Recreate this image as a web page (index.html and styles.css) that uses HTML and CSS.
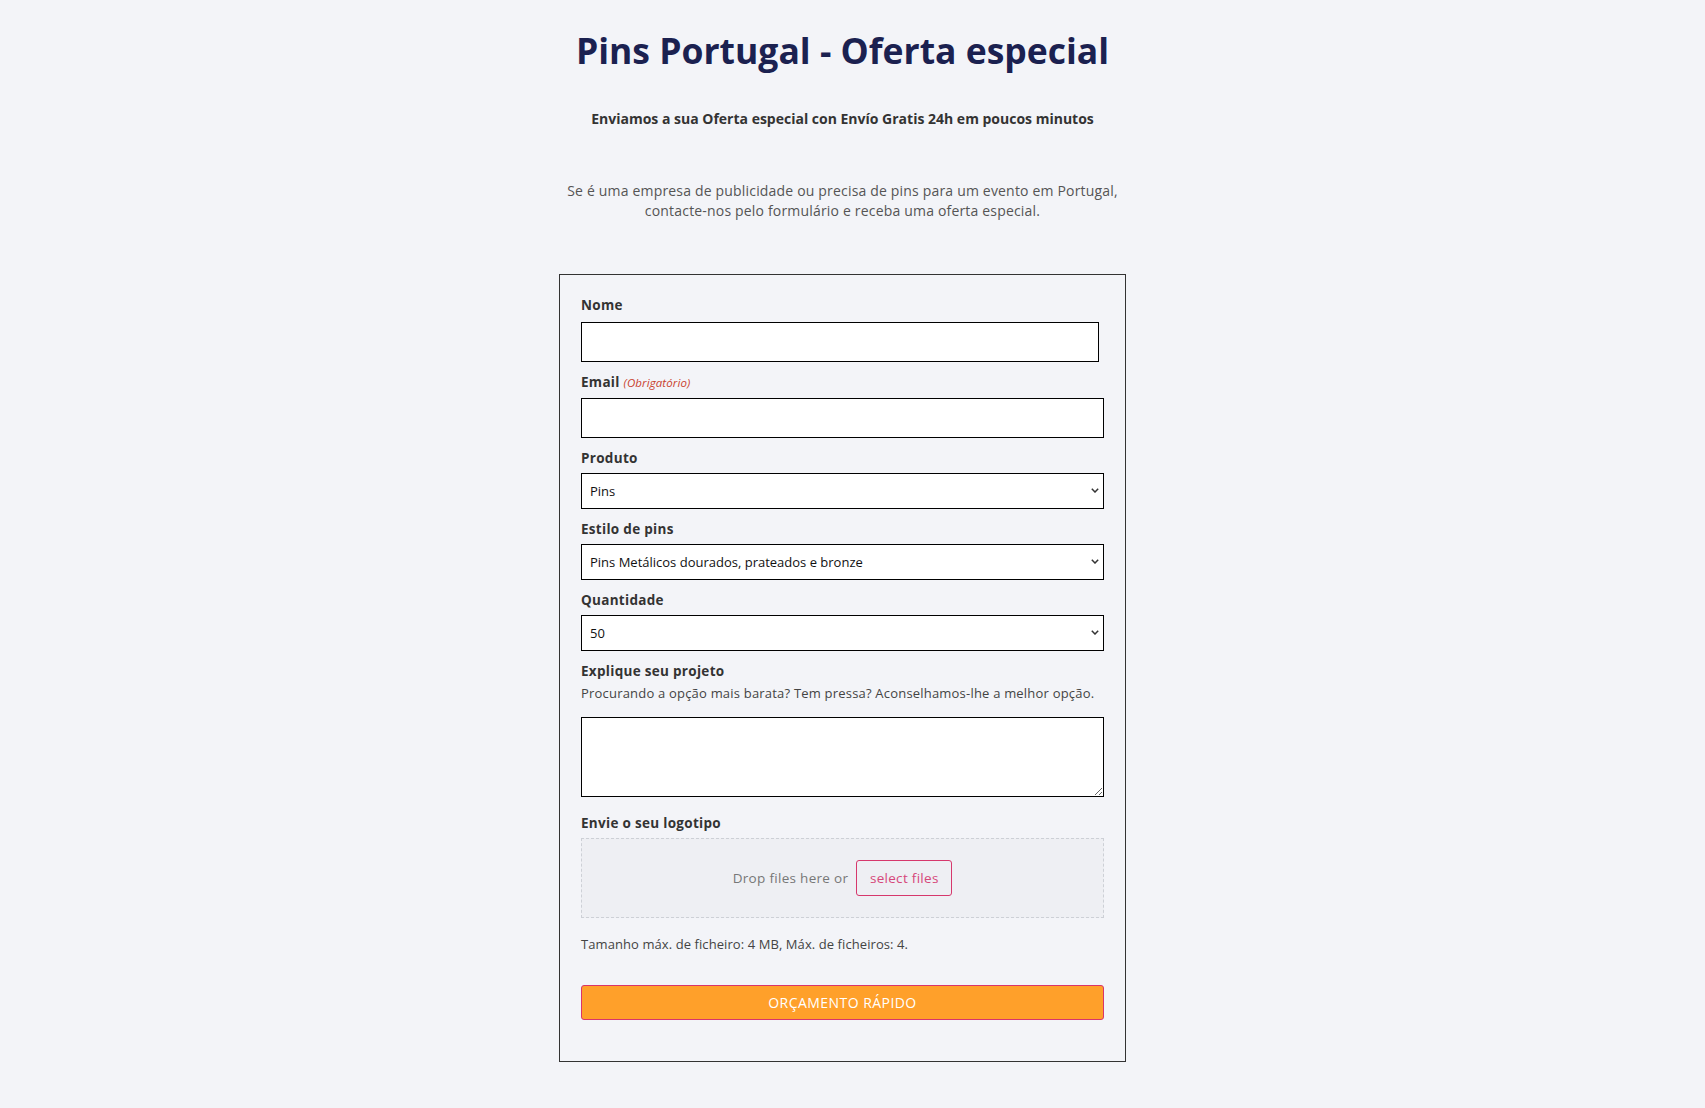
FILE: index.html
```html
<!DOCTYPE html>
<html lang="pt">
<head>
<meta charset="utf-8">
<title>Pins Portugal - Oferta especial</title>
<link rel="stylesheet" href="styles.css">
</head>
<body>
<div class="page">
  <h1 class="title">Pins Portugal - Oferta especial</h1>
  <p class="subtitle">Enviamos a sua Oferta especial con Envío Gratis 24h em poucos minutos</p>
  <p class="intro">Se é uma empresa de publicidade ou precisa de pins para um evento em Portugal,<br>contacte-nos pelo formulário e receba uma oferta especial.</p>

  <form class="form-box">
    <div class="field">
      <label class="label label--first" for="nome">Nome</label>
      <input class="input input--short" id="nome" type="text">
    </div>
    <div class="field">
      <label class="label" for="email">Email <span class="required">(Obrigatório)</span></label>
      <input class="input" id="email" type="email">
    </div>
    <div class="field">
      <label class="label" for="produto">Produto</label>
      <div class="select-wrap">
        <select class="select" id="produto"><option>Pins</option></select>
        <svg class="chevron" width="8" height="5" viewBox="0 0 8 5"><path d="M0.8 0.8 L4 4 L7.2 0.8" fill="none" stroke="#333" stroke-width="1.5"/></svg>
      </div>
    </div>
    <div class="field">
      <label class="label" for="estilo">Estilo de pins</label>
      <div class="select-wrap">
        <select class="select" id="estilo"><option>Pins Metálicos dourados, prateados e bronze</option></select>
        <svg class="chevron" width="8" height="5" viewBox="0 0 8 5"><path d="M0.8 0.8 L4 4 L7.2 0.8" fill="none" stroke="#333" stroke-width="1.5"/></svg>
      </div>
    </div>
    <div class="field">
      <label class="label" for="qtd">Quantidade</label>
      <div class="select-wrap">
        <select class="select" id="qtd"><option>50</option></select>
        <svg class="chevron" width="8" height="5" viewBox="0 0 8 5"><path d="M0.8 0.8 L4 4 L7.2 0.8" fill="none" stroke="#333" stroke-width="1.5"/></svg>
      </div>
    </div>
    <div class="field field--wide">
      <label class="label label--tight" for="proj">Explique seu projeto</label>
      <p class="help">Procurando a opção mais barata? Tem pressa? Aconselhamos-lhe a melhor opção.</p>
      <textarea class="textarea" id="proj"></textarea>
    </div>
    <div class="field">
      <span class="label">Envie o seu logotipo</span>
      <div class="dropzone">
        <span class="drop-text">Drop files here or</span>
        <button type="button" class="select-files">select files</button>
      </div>
    </div>
    <p class="file-note">Tamanho máx. de ficheiro: 4 MB, Máx. de ficheiros: 4.</p>
    <button type="button" class="submit">ORÇAMENTO RÁPIDO</button>
  </form>
</div>
</body>
</html>
```

FILE: styles.css
```css
* { box-sizing: border-box; }

body {
  margin: 0;
  background: #f3f4f8;
  font-family: "Open Sans", "Noto Sans", sans-serif;
  color: #333;
}

.page {
  padding: 0 20px 60px 0;
  display: flex;
  flex-direction: column;
  align-items: center;
}

.title {
  margin: 29px 0 0;
  font-size: 35.5px;
  line-height: 43px;
  font-weight: 700;
  color: #1b2150;
  text-align: center;
}

.subtitle {
  margin: 37px 0 0;
  font-size: 14px;
  line-height: 20px;
  font-weight: 700;
  color: #333;
  text-align: center;
}

.intro {
  margin: 52px 0 0;
  font-size: 14px;
  line-height: 20px;
  letter-spacing: 0.18px;
  color: #555;
  text-align: center;
}

.form-box {
  margin: 53px 0 0;
  width: 567px;
  border: 1px solid #333;
  padding: 20px 21px 41px;
}

.field { margin-bottom: 10px; }
.field--wide { margin-bottom: 16px; }

.label {
  display: block;
  margin-bottom: 5px;
  font-size: 13.5px;
  line-height: 20px;
  letter-spacing: 0.3px;
  font-weight: 700;
  color: #333;
}
.label--first { margin-bottom: 7px; }
.label--tight { margin-bottom: 2px; }

.required {
  font-size: 11.5px;
  font-weight: 400;
  font-style: italic;
  letter-spacing: 0.1px;
  color: #c9432e;
}

.input {
  display: block;
  width: 100%;
  height: 40px;
  border: 1px solid #000;
  background: #fff;
  border-radius: 0;
  font: inherit;
}
.input--short { width: 518px; }

.select-wrap { position: relative; }

.select {
  display: block;
  width: 100%;
  height: 36px;
  border: 1px solid #000;
  border-radius: 0;
  background: #fff;
  padding: 0 8px;
  font-family: "Open Sans", sans-serif;
  font-size: 13px;
  color: #111;
  -webkit-appearance: none;
  appearance: none;
}

.chevron {
  position: absolute;
  right: 5px;
  top: 15px;
  pointer-events: none;
}

.help {
  margin: 0 0 14px;
  font-size: 13px;
  line-height: 20px;
  letter-spacing: 0.2px;
  color: #444;
}

.textarea {
  display: block;
  width: 100%;
  height: 80px;
  border: 1px solid #000;
  border-radius: 0;
  background: #fff;
  resize: vertical;
  font: inherit;
}

.dropzone {
  height: 80px;
  border: 1px dashed #cdd0d6;
  background: #eeeff3;
  display: flex;
  align-items: center;
  justify-content: center;
  gap: 8px;
}

.drop-text {
  font-size: 13.5px;
  letter-spacing: 0.3px;
  color: #777;
}

.select-files {
  width: 96px;
  height: 36px;
  border: 1px solid #d6386c;
  border-radius: 3px;
  background: transparent;
  color: #d6477a;
  font-family: "Open Sans", sans-serif;
  font-size: 13.5px;
  letter-spacing: 0.3px;
  padding: 0;
}

.file-note {
  margin: 16px 0 31px;
  font-size: 13px;
  line-height: 20px;
  letter-spacing: 0.08px;
  color: #444;
}

.submit {
  display: block;
  width: 100%;
  height: 35px;
  background: #ffa02a;
  border: 1px solid #d9346a;
  border-radius: 3px;
  color: #fff;
  font-family: "Open Sans", sans-serif;
  font-size: 14px;
  letter-spacing: 0.45px;
  padding: 0;
}
```
